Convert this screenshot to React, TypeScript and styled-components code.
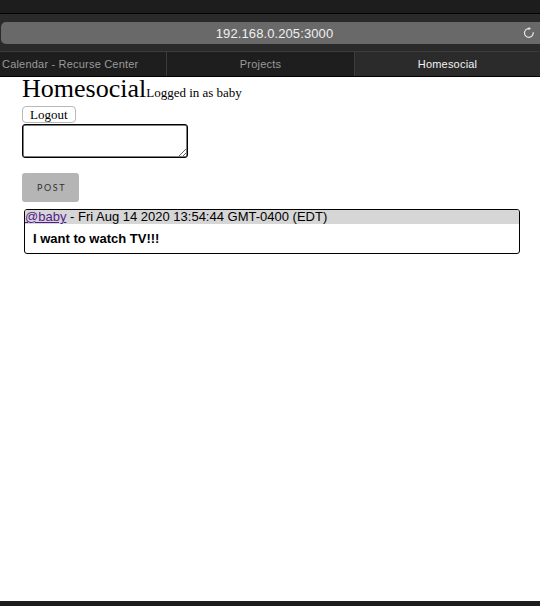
import React from 'react'
import styled, { createGlobalStyle } from 'styled-components'

const GlobalStyle = createGlobalStyle`
  html, body {
    margin: 0;
    padding: 0;
    background: #fff;
  }
`

const Window = styled.div`
  width: 540px;
  height: 606px;
  display: flex;
  flex-direction: column;
  overflow: hidden;
  font-family: "Liberation Sans", Arial, sans-serif;
`
const TopStrip = styled.div`
  height: 13px;
  background: #1d1d1d;
  border-bottom: 1px solid #000;
`
const Toolbar = styled.div`
  height: 37px;
  box-sizing: border-box;
  padding: 8px 0 7px 1px;
  background: #2a2a2a;
  display: flex;
`
const UrlField = styled.div`
  flex: 1;
  margin-right: -8px;
  height: 22px;
  border-radius: 5px;
  background: #696969;
  position: relative;
  display: flex;
  align-items: center;
  justify-content: center;
  color: #f0f0f0;
  font-size: 13px;
  letter-spacing: 0.1px;
`
const Reload = styled.svg`
  position: absolute;
  right: 12px;
  top: 4px;
`
const TabBar = styled.div`
  height: 24px;
  display: flex;
  border-top: 1px solid #3c3c3c;
  border-bottom: 1px solid #000;
  background: #1e1e1e;
`
const Tab = styled.div<{ $active?: boolean, $width: number, $left?: boolean }>`
  width: ${(p) => p.$width}px;
  flex: none;
  box-sizing: border-box;
  display: flex;
  align-items: center;
  justify-content: ${(p) => (p.$left ? 'flex-start' : 'center')};
  padding-left: ${(p) => (p.$left ? 2 : 0)}px;
  font-size: 11px;
  letter-spacing: 0.2px;
  color: ${(p) => (p.$active ? '#f2f2f2' : '#9a9a9a')};
  background: ${(p) => (p.$active ? '#2b2b2b' : '#1e1e1e')};
  border-left: ${(p) => (p.$left ? 'none' : '1px solid #3c3c3c')};
  white-space: nowrap;
`
const Page = styled.div`
  flex: 1;
  background: #fff;
  padding: 0 22px;
  font-family: "Liberation Serif", "Times New Roman", serif;
  color: #000;
`
const Header = styled.div`
  display: flex;
  align-items: baseline;
  line-height: 24px;
`
const Title = styled.span`
  font-size: 26px;
`
const Sub = styled.span`
  font-size: 13px;
`
const LogoutButton = styled.button`
  display: block;
  margin-top: 1px;
  height: 17px;
  padding: 0 7px;
  font-family: "Liberation Serif", "Times New Roman", serif;
  font-size: 13px;
  line-height: 15px;
  background: #fff;
  color: #000;
  border: 1px solid #b8b8b8;
  border-radius: 4px;
`
const TextArea = styled.textarea`
  display: block;
  margin-top: 1px;
  width: 166px;
  height: 34px;
  box-sizing: border-box;
  border: 1px solid #000;
  box-shadow: inset 0 0 0 0.5px #000;
  border-radius: 3px;
  outline: none;
`
const PostButton = styled.button`
  display: block;
  margin-top: 15px;
  width: 57px;
  height: 29px;
  border: none;
  border-radius: 3px;
  background: #b5b5b5;
  color: #333;
  font-family: Lato, "Open Sans", sans-serif;
  font-size: 9px;
  letter-spacing: 1.6px;
  padding: 0 0 0 2px;
`
const Card = styled.div`
  margin: 7px 0 0 2px;
  width: 496px;
  box-sizing: border-box;
  border: 1px solid #000;
  border-radius: 3px;
  overflow: hidden;
  font-family: "Liberation Sans", Arial, sans-serif;
  font-size: 13px;
`
const CardHead = styled.div`
  background: #d6d6d6;
  height: 14px;
  line-height: 14px;
  white-space: nowrap;
`
const UserLink = styled.a`
  color: #551a8b;
  text-decoration: underline;
`
const CardBody = styled.div`
  padding: 7px 8px 7px;
  line-height: 15px;
  font-weight: bold;
`
const BottomStrip = styled.div`
  height: 5px;
  background: #1d1d1d;
`

export default function App() {
  return (
    <Window>
      <GlobalStyle />
      <TopStrip />
      <Toolbar>
        <UrlField>
          192.168.0.205:3000
          <Reload width="14" height="14" viewBox="0 0 14 14" fill="none" stroke="#e6e6e6" strokeWidth="1.2">
            <path d="M11.2 6.2 A4.4 4.4 0 1 1 7.4 2.6" />
            <path d="M6.6 0.9 L9 2.6 L6.6 4.3 Z" fill="#e6e6e6" stroke="none" />
          </Reload>
        </UrlField>
      </Toolbar>
      <TabBar>
        <Tab $width={166} $left>Calendar - Recurse Center</Tab>
        <Tab $width={188}>Projects</Tab>
        <Tab $width={186} $active>Homesocial</Tab>
      </TabBar>
      <Page>
        <Header>
          <Title>Homesocial</Title>
          <Sub>Logged in as baby</Sub>
        </Header>
        <LogoutButton>Logout</LogoutButton>
        <TextArea />
        <PostButton>POST</PostButton>
        <Card>
          <CardHead>
            <UserLink href="#">@baby</UserLink> - Fri Aug 14 2020 13:54:44 GMT-0400 (EDT)
          </CardHead>
          <CardBody>I want to watch TV!!!</CardBody>
        </Card>
      </Page>
      <BottomStrip />
    </Window>
  )
}
